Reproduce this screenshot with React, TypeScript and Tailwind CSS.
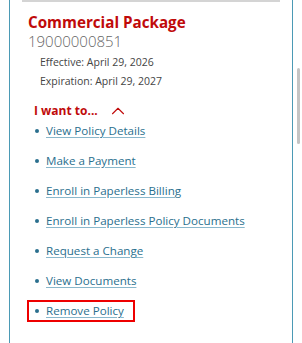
import { ChevronUp } from 'lucide-react';

const LINKS = [
  'View Policy Details',
  'Make a Payment',
  'Enroll in Paperless Billing',
  'Enroll in Paperless Policy Documents',
  'Request a Change',
  'View Documents',
  'Remove Policy',
];

export default function App() {
  return (
    <div className="relative h-[343px] w-[302px] overflow-hidden bg-white" style={{ fontFamily: '"Open Sans", sans-serif' }}>
      {/* scrollbar thumb */}
      <div className="absolute left-[297px] top-[68px] h-[76px] w-[3px] rounded bg-[#c4c4c4]" />

      <div className="ml-[9px] h-full w-[284px] border-x-[1.5px] border-[#4b9ab5]">
        <div className="mx-[12px] h-[2px] bg-[#d4d4d4]" />

        <div className="pl-[18px] pt-[11px]">
          <h2 className="text-[15.2px] font-bold leading-[19px] text-[#c00a0a]">Commercial Package</h2>
          <div className="text-[15px] font-light leading-[18px] text-[#666]">19000000851</div>

          <div className="mt-[3px] pl-[12px] text-[10.5px] leading-[19px] text-[#444]">
            <div>Effective: April 29, 2026</div>
            <div>Expiration: April 29, 2027</div>
          </div>

          <div className="mt-[9px] flex items-center gap-[9px] pl-[6px]">
            <span className="text-[12px] font-bold leading-[18px] text-[#c00a0a]">I want to...</span>
            <ChevronUp className="h-[22px] w-[22px] text-[#c00a0a]" strokeWidth={1.2} />
          </div>

          <ul className="-mt-[6px] flex flex-col">
            {LINKS.map((l, i) => (
              <li key={l} className="flex h-[30px] items-center">
                <div
                  className={
                    i === LINKS.length - 1
                      ? 'flex h-[22px] items-center gap-[7px] border-2 border-[#ee0000] pl-[6px] pr-[9px] -ml-[1px]'
                      : 'flex items-center gap-[7px] border-2 border-transparent pl-[6px] pr-[4px] -ml-[1px]'
                  }
                >
                  <span className="h-[4px] w-[4px] rounded-full bg-[#2a6f8e]" />
                  <a className="text-[11.6px] leading-[16px] text-[#2a6f8e] underline decoration-[#8ab8cc] underline-offset-2">
                    {l}
                  </a>
                </div>
              </li>
            ))}
          </ul>
        </div>
      </div>
    </div>
  );
}
